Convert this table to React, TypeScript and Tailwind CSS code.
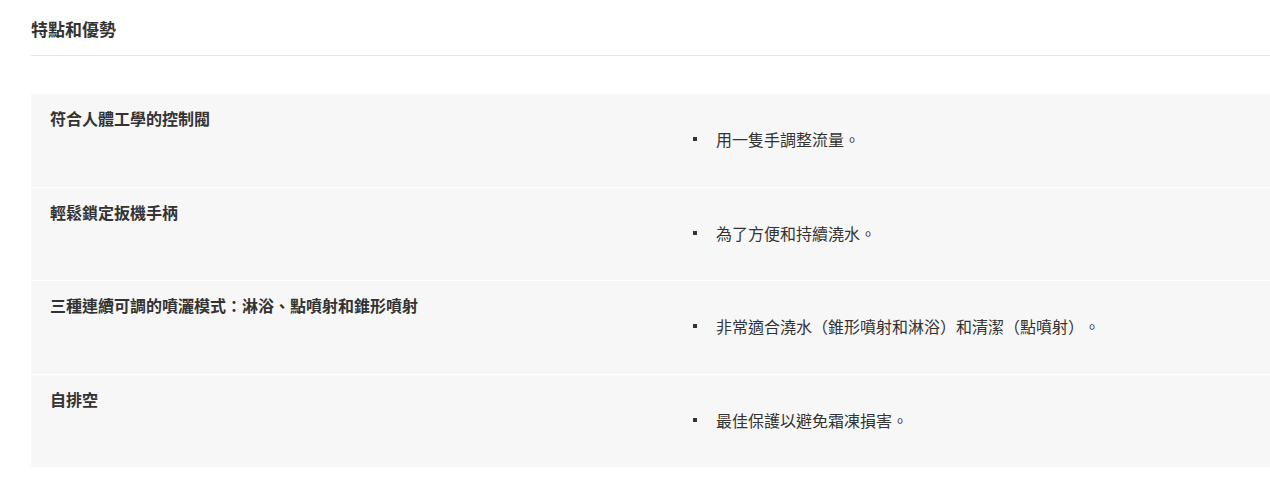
const features = [
  { title: '符合人體工學的控制閥', detail: '用一隻手調整流量。' },
  { title: '輕鬆鎖定扳機手柄', detail: '為了方便和持續澆水。' },
  { title: '三種連續可調的噴灑模式：淋浴、點噴射和錐形噴射', detail: '非常適合澆水（錐形噴射和淋浴）和清潔（點噴射）。' },
  { title: '自排空', detail: '最佳保護以避免霜凍損害。' },
]

function FeatureRow({ title, detail }: { title: string; detail: string }) {
  return (
    <div className="flex h-[92.5px] bg-[#f7f7f7]">
      <div className="w-[645px] shrink-0 pl-[19px] pt-[12px]">
        <p className="text-[16px] leading-[24px] font-bold text-[#333]">{title}</p>
      </div>
      <div className="flex-1 pl-[17px] pt-[33px]">
        <ul>
          <li className="flex items-center text-[16px] leading-[24px] text-[#333]">
            <span className="w-[4px] h-[4px] bg-[#333] mr-[19px] shrink-0" />
            {detail}
          </li>
        </ul>
      </div>
    </div>
  )
}

export default function App() {
  return (
    <div
      className="min-h-[496px] bg-white pl-[31px] [text-spacing-trim:space-all]"
      style={{ fontFamily: '"Noto Sans CJK TC", "Noto Sans", sans-serif' }}
    >
      <div className="pt-[16px] pb-[13px] border-b border-[#e5e5e5]">
        <h2 className="text-[17px] leading-[26px] font-bold text-[#333]">特點和優勢</h2>
      </div>

      <div className="mt-[38px] flex flex-col gap-px">
        {features.map(f => <FeatureRow key={f.title} title={f.title} detail={f.detail} />)}
      </div>
    </div>
  )
}
